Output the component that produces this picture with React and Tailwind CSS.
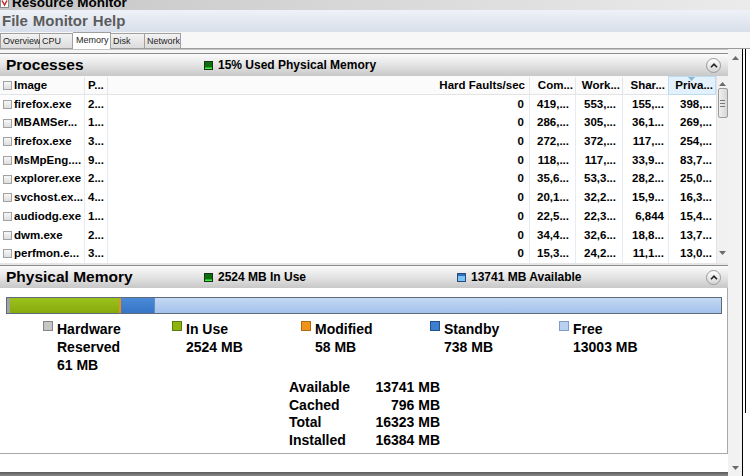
import React from 'react';

const rows = [
  ['firefox.exe', '2...', '0', '419,...', '553,...', '155,...', '398,...'],
  ['MBAMSer...', '1...', '0', '286,...', '305,...', '36,1...', '269,...'],
  ['firefox.exe', '3...', '0', '272,...', '372,...', '117,...', '254,...'],
  ['MsMpEng....', '9...', '0', '118,...', '117,...', '33,9...', '83,7...'],
  ['explorer.exe', '2...', '0', '35,6...', '53,3...', '28,2...', '25,0...'],
  ['svchost.ex...', '4...', '0', '20,1...', '32,2...', '15,9...', '16,3...'],
  ['audiodg.exe', '1...', '0', '22,5...', '22,3...', '6,844', '15,4...'],
  ['dwm.exe', '2...', '0', '34,4...', '32,6...', '18,8...', '13,7...'],
  ['perfmon.e...', '3...', '0', '15,3...', '24,2...', '11,1...', '13,0...'],
];

const legend = [
  { sq: 'bg-[#c6c6c6] border-[#858585]', lines: ['Hardware', 'Reserved', '61 MB'] },
  { sq: 'bg-[#8db40c] border-[#5b7a10]', lines: ['In Use', '2524 MB'] },
  { sq: 'bg-[#ef9418] border-[#b46a10]', lines: ['Modified', '58 MB'] },
  { sq: 'bg-[#3f7fcf] border-[#22518f]', lines: ['Standby', '738 MB'] },
  { sq: 'bg-[#b8d1f1] border-[#7e9cc4]', lines: ['Free', '13003 MB'] },
];

const summary = [
  ['Available', '13741 MB'],
  ['Cached', '796 MB'],
  ['Total', '16323 MB'],
  ['Installed', '16384 MB'],
];

function Arrow({ down }) {
  return (
    <svg width="7" height="4" viewBox="0 0 7 4">
      <path d={down ? 'M0 0H7L3.5 4Z' : 'M0 4H7L3.5 0Z'} fill="#6b6b6b" />
    </svg>
  );
}

function Collapse() {
  return (
    <div className="ml-auto mr-[7px] flex h-[15px] w-[15px] items-center justify-center rounded-full border border-[#9a9a9a] bg-gradient-to-b from-white to-[#d6d6d6]">
      <svg width="8" height="5" viewBox="0 0 8 5">
        <path d="M1 4.2L4 1.2L7 4.2" fill="none" stroke="#222" strokeWidth="1.6" />
      </svg>
    </div>
  );
}

function Indicator({ blue }) {
  return (
    <svg width="9" height="9" viewBox="0 0 9 9" className="mr-[5px]">
      <rect x="0.5" y="0.5" width="8" height="8" fill={blue ? '#7cc2f4' : '#0b6e0b'} stroke={blue ? '#2a4a7a' : '#1b2e1b'} />
      <rect x="1" y={blue ? 1 : 6.5} width="7" height={blue ? 2 : 1.5} fill={blue ? '#2f6fc0' : '#3cf23c'} />
    </svg>
  );
}

function PanelHeader({ title, children }) {
  return (
    <div className="flex h-[23px] items-center border-t border-[#8c8c8c] bg-gradient-to-b from-[#fbfbfb] via-[#e4e4e4] to-[#c8c8c8]">
      <div className="w-[204px] pl-[6px] text-[15.5px] font-bold leading-none text-black">{title}</div>
      {children}
      <Collapse />
    </div>
  );
}

function Check() {
  return <span className="mr-[2px] inline-block h-[9px] w-[9px] shrink-0 border border-[#a2a2a2] bg-gradient-to-b from-[#f7f7f7] to-[#dedede]" />;
}

const cols = 'grid grid-cols-[84px_23px_422px_46px_47px_46px_48px]';

export default function App() {
  return (
    <div className="h-[476px] w-[750px] overflow-hidden bg-[#f0f0f0] font-['Liberation_Sans',Arial,sans-serif] text-black">
      {/* title bar */}
      <div className="flex h-[10px] items-start overflow-hidden bg-gradient-to-r from-[#c6c6c6] to-[#ebebeb]">
        <svg width="9" height="9" viewBox="0 0 9 9" className="mt-[-1px] shrink-0">
          <rect x="0.5" y="0" width="8" height="8.5" fill="#fff" stroke="#8a8a8a" />
          <path d="M2 1.5L4.5 6L7 1.5" fill="none" stroke="#c0282a" strokeWidth="1.5" />
        </svg>
        <span className="ml-[3px] mt-[-4px] text-[13.5px] font-bold leading-[14px]">Resource Monitor</span>
      </div>

      {/* menu */}
      <div className="flex h-[22px] items-center gap-[5px] bg-gradient-to-b from-[#eef2f8] to-[#d8dfea] pl-[2px] text-[15px] font-bold text-[#5c5c5c]">
        <span>File</span>
        <span>Monitor</span>
        <span>Help</span>
      </div>

      {/* tabs */}
      <div className="flex h-[17px] items-end border-b border-[#9c9c9c] bg-[#f7f7f7] text-[9px] text-[#1e1e1e]">
        <div className="h-[15px] w-[40px] border border-b-0 border-[#a0a0a0] bg-gradient-to-b from-[#f3f3f3] to-[#dcdcdc] pl-[2px] leading-[14px]">Overview</div>
        <div className="h-[15px] w-[33px] border border-b-0 border-l-0 border-[#a0a0a0] bg-gradient-to-b from-[#f3f3f3] to-[#dcdcdc] pl-[2px] leading-[14px]">CPU</div>
        <div className="mb-[-1px] h-[17px] w-[38px] border border-b-0 border-l-0 border-[#a0a0a0] bg-white pl-[3px] leading-[15px]">Memory</div>
        <div className="h-[15px] w-[34px] border border-b-0 border-l-0 border-[#a0a0a0] bg-gradient-to-b from-[#f3f3f3] to-[#dcdcdc] pl-[2px] leading-[14px]">Disk</div>
        <div className="h-[15px] w-[36px] border border-b-0 border-l-0 border-[#a0a0a0] bg-gradient-to-b from-[#f3f3f3] to-[#dcdcdc] pl-[2px] leading-[14px]">Network</div>
      </div>

      <div className="flex h-[427px]">
        {/* main column */}
        <div className="flex w-[728px] flex-col">
          <div className="h-[4px] border-t border-[#c4c4c4] bg-[#f7f7f7]" />
          <PanelHeader title="Processes">
            <Indicator />
            <span className="text-[12px] font-bold">15% Used Physical Memory</span>
          </PanelHeader>

          {/* process table */}
          <div className="flex h-[187px] bg-white text-[11.5px] font-bold">
            <div className="w-[716px] overflow-hidden">
              <div className={`${cols} h-[19px] items-center border-b border-[#e4e4e4] bg-[#fbfbfb]`}>
                <div className="flex items-center pl-[3px]"><Check />Image</div>
                <div className="border-l border-[#e6e6e6] pl-[3px]">P...</div>
                <div className="border-l border-[#e6e6e6] pr-[4px] text-right">Hard Faults/sec</div>
                <div className="border-l border-[#e6e6e6] pr-[2px] text-right">Com...</div>
                <div className="border-l border-[#e6e6e6] pr-[2px] text-right">Work...</div>
                <div className="border-l border-[#e6e6e6] pr-[3px] text-right">Shar...</div>
                <div className="relative flex h-[19px] items-center justify-end border border-[#bcdcf2] bg-[#e2f1fb] pr-[2px]">
                  Priva...
                  <svg width="7" height="4" viewBox="0 0 7 4" className="absolute left-[19px] top-0">
                    <path d="M0 0H7L3.5 4Z" fill="#8cb6d6" />
                  </svg>
                </div>
              </div>
              {rows.map((r, i) => (
                <div key={i} className={`${cols} h-[18.7px] items-center`}>
                  <div className="flex h-full items-center pl-[3px]"><Check />{r[0]}</div>
                  <div className="flex h-full items-center border-l border-[#e6ecf3] pl-[3px]">{r[1]}</div>
                  <div className="flex h-full items-center justify-end border-l border-[#e6ecf3] pr-[5px]">{r[2]}</div>
                  <div className="flex h-full items-center justify-end border-l border-[#e6ecf3] pr-[6px]">{r[3]}</div>
                  <div className="flex h-full items-center justify-end border-l border-[#e6ecf3] pr-[6px]">{r[4]}</div>
                  <div className="flex h-full items-center justify-end border-l border-[#e6ecf3] pr-[4px]">{r[5]}</div>
                  <div className="flex h-full items-center justify-end border-l border-[#e6ecf3] pr-[4px]">{r[6]}</div>
                </div>
              ))}
            </div>
            {/* inner scrollbar */}
            <div className="flex w-[12px] flex-col items-center border-l border-[#e2e2e2] bg-[#f1f1f1] pt-[6px]">
              <Arrow />
              <div className="mt-[2px] flex h-[30px] w-[10px] flex-col items-center justify-center gap-[2px] rounded-[2px] border border-[#9c9c9c] bg-gradient-to-r from-[#f0f0f0] to-[#d6d6d6]">
                <span className="h-px w-[5px] bg-[#777]" />
                <span className="h-px w-[5px] bg-[#777]" />
                <span className="h-px w-[5px] bg-[#777]" />
              </div>
              <div className="flex-1" />
              <div className="mb-[8px]"><Arrow down /></div>
            </div>
          </div>

          <div className="h-[2px] bg-[#e6e6e6]" />

          <PanelHeader title="Physical Memory">
            <div className="flex w-[253px] items-center">
              <Indicator />
              <span className="text-[12px] font-bold">2524 MB In Use</span>
            </div>
            <Indicator blue />
            <span className="text-[12px] font-bold">13741 MB Available</span>
          </PanelHeader>

          {/* physical memory body */}
          <div className="h-[166px] border-b border-r border-[#a8a8a8] bg-white pt-[9px]">
            <div className="ml-[6px] flex h-[17px] w-[716px] border border-[#5f6b78]">
              <div className="w-[3px] bg-[#a3a3a3]" />
              <div className="w-[109px] bg-gradient-to-b from-[#9cc21c] to-[#86aa0a]" />
              <div className="w-[2px] bg-[#e8901e]" />
              <div className="w-[33px] bg-gradient-to-b from-[#4a8ad8] to-[#3775c6]" />
              <div className="flex-1 border-l border-[#6a8cb8] bg-gradient-to-b from-[#c4d9f4] to-[#a3c2ec]" />
            </div>

            <div className="ml-[43px] mt-[6px] flex text-[14px] font-bold leading-[18px]">
              {legend.map((l, i) => (
                <div key={i} className="flex w-[129px]">
                  <span className={`mt-[1px] h-[10px] w-[10px] shrink-0 border ${l.sq}`} />
                  <div className="ml-[4px]">
                    {l.lines.map((t) => <div key={t}>{t}</div>)}
                  </div>
                </div>
              ))}
            </div>

            <div className="ml-[289px] mt-[5px] grid w-[151px] grid-cols-[auto_1fr] text-[14px] font-bold leading-[17.5px]">
              {summary.map(([k, v]) => (
                <React.Fragment key={k}>
                  <div>{k}</div>
                  <div className="text-right">{v}</div>
                </React.Fragment>
              ))}
            </div>
          </div>

          <div className="h-[18px] bg-white" />
          <div className="flex-1 bg-gradient-to-b from-[#5a5a5a] to-[#8a8a8a]" />
        </div>

        {/* outer scrollbar */}
        <div className="flex w-[14px] flex-col items-center bg-[#f2f2f2] pt-[7px]">
          <Arrow />
          <div className="flex-1" />
          <div className="mb-[6px]"><Arrow down /></div>
        </div>

        {/* right pane edge */}
        <div className="w-[8px] border-l border-black bg-white">
          <div className="ml-[2px] h-[364px] border-l border-black" />
        </div>
      </div>
    </div>
  );
}
